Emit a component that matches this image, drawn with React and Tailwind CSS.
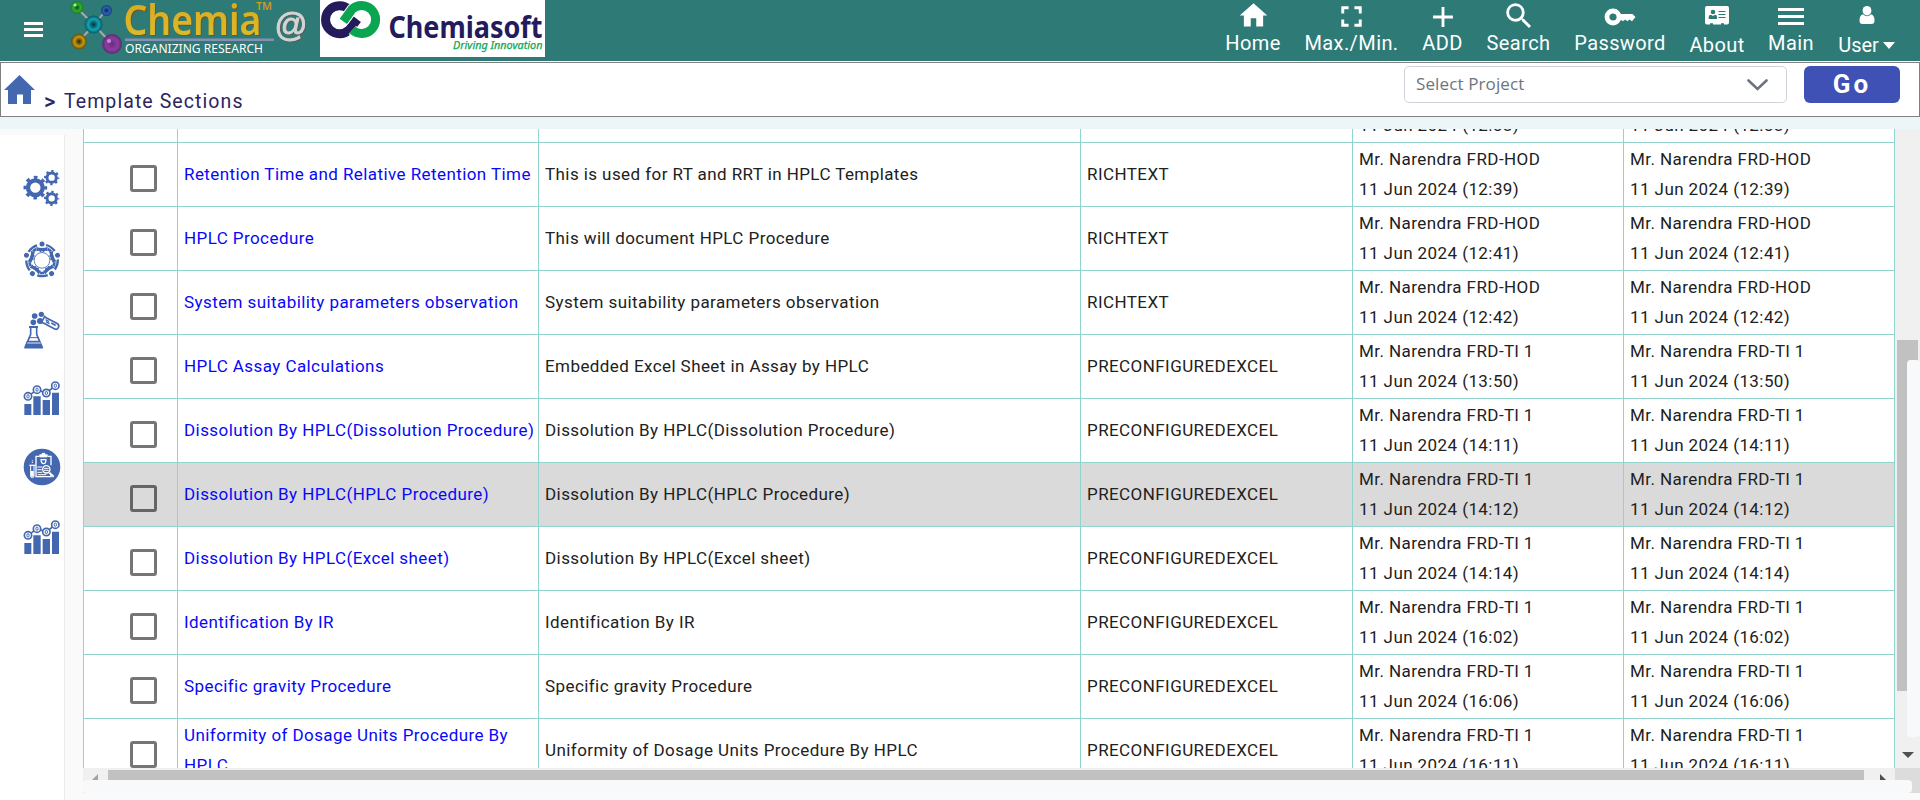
import React from "react";
import { MdHome, MdFullscreen, MdAdd, MdSearch } from "react-icons/md";

const BLUE = "#4468b0";

const HOD = "Mr. Narendra FRD-HOD";
const TL = "Mr. Narendra FRD-Tl 1";

const rows = [
  { name: "", desc: "", type: "", who: HOD, when: "11 Jun 2024 (12:38)" },
  { name: "Retention Time and Relative Retention Time", desc: "This is used for RT and RRT in HPLC Templates", type: "RICHTEXT", who: HOD, when: "11 Jun 2024 (12:39)" },
  { name: "HPLC Procedure", desc: "This will document HPLC Procedure", type: "RICHTEXT", who: HOD, when: "11 Jun 2024 (12:41)" },
  { name: "System suitability parameters observation", desc: "System suitability parameters observation", type: "RICHTEXT", who: HOD, when: "11 Jun 2024 (12:42)" },
  { name: "HPLC Assay Calculations", desc: "Embedded Excel Sheet in Assay by HPLC", type: "PRECONFIGUREDEXCEL", who: TL, when: "11 Jun 2024 (13:50)" },
  { name: "Dissolution By HPLC(Dissolution Procedure)", desc: "Dissolution By HPLC(Dissolution Procedure)", type: "PRECONFIGUREDEXCEL", who: TL, when: "11 Jun 2024 (14:11)" },
  { name: "Dissolution By HPLC(HPLC Procedure)", desc: "Dissolution By HPLC(HPLC Procedure)", type: "PRECONFIGUREDEXCEL", who: TL, when: "11 Jun 2024 (14:12)", active: true },
  { name: "Dissolution By HPLC(Excel sheet)", desc: "Dissolution By HPLC(Excel sheet)", type: "PRECONFIGUREDEXCEL", who: TL, when: "11 Jun 2024 (14:14)" },
  { name: "Identification By IR", desc: "Identification By IR", type: "PRECONFIGUREDEXCEL", who: TL, when: "11 Jun 2024 (16:02)" },
  { name: "Specific gravity Procedure", desc: "Specific gravity Procedure", type: "PRECONFIGUREDEXCEL", who: TL, when: "11 Jun 2024 (16:06)" },
  { name: "Uniformity of Dosage Units Procedure By HPLC", desc: "Uniformity of Dosage Units Procedure By HPLC", type: "PRECONFIGUREDEXCEL", who: TL, when: "11 Jun 2024 (16:11)" },
];

function ChemiaLogo() {
  return (
    <svg width="242" height="61" viewBox="68 0 242 61" className="block shrink-0">
      <defs>
        <radialGradient id="gGreen"><stop offset="0" stopColor="#0c4a10" /><stop offset=".55" stopColor="#2fae2f" /><stop offset="1" stopColor="#1c7a26" /></radialGradient>
        <radialGradient id="gBlue"><stop offset="0" stopColor="#0d2455" /><stop offset=".6" stopColor="#2a62b4" /><stop offset="1" stopColor="#153f80" /></radialGradient>
        <radialGradient id="gTeal"><stop offset="0" stopColor="#04303a" /><stop offset=".6" stopColor="#12a5b5" /><stop offset="1" stopColor="#075560" /></radialGradient>
        <radialGradient id="gGold"><stop offset="0" stopColor="#2a2000" /><stop offset=".6" stopColor="#c79a10" /><stop offset="1" stopColor="#5e4a08" /></radialGradient>
        <radialGradient id="gPurple"><stop offset="0" stopColor="#6a2c80" /><stop offset=".6" stopColor="#8a3fa0" /><stop offset="1" stopColor="#5b2a70" /></radialGradient>
        <linearGradient id="gText" x1="0" y1="0" x2="0" y2="1"><stop offset="0" stopColor="#d9a420" /><stop offset="1" stopColor="#dcc02c" /></linearGradient>
      </defs>
      <path d="M77 8 94 25 106 10M94 25 79 41M94 25 112 44" fill="none" stroke="#a9a9ad" strokeWidth="2" />
      <circle cx="77" cy="7.5" r="6.500" fill="url(#gGreen)" />
      <circle cx="106.500" cy="10.500" r="5.500" fill="url(#gBlue)" />
      <circle cx="93.500" cy="24.500" r="9" fill="url(#gTeal)" />
      <circle cx="79" cy="41.500" r="7.800" fill="url(#gGold)" />
      <circle cx="112" cy="44" r="10" fill="url(#gPurple)" />
      <circle cx="75" cy="5" r="1.600" fill="#a6f0a0" />
      <circle cx="109" cy="41" r="2" fill="#c78ad6" />
      <g fontFamily="'Noto Sans','Open Sans',sans-serif">
        <text x="123.500" y="35" fontSize="41" fontWeight="600" textLength="138" lengthAdjust="spacingAndGlyphs" fill="url(#gText)" className="drop-shadow-[1px_1px_0_#6b5a1a]">Chemia</text>
        <text x="256" y="10" fontSize="10.500" fontWeight="600" textLength="16" lengthAdjust="spacingAndGlyphs" fill="#c99c22">TM</text>
        <text x="125" y="53" fontSize="12.400" textLength="138" lengthAdjust="spacingAndGlyphs" fill="#ffffff">ORGANIZING RESEARCH</text>
      </g>
      <rect x="125" y="38.500" width="149" height="2.500" fill="#8590b4" />
      <text x="274.500" y="36" fontFamily="'Liberation Sans',sans-serif" fontSize="33.500" textLength="33" lengthAdjust="spacingAndGlyphs" fill="#d4d4d4" stroke="#d4d4d4" strokeWidth="1" className="drop-shadow-[1px_1px_0_#555f5f]">@</text>
    </svg>
  );
}

function ChemiasoftLogo() {
  return (
    <svg width="225" height="57" viewBox="320 0 225 57" className="ml-[10px] block shrink-0 bg-white">
      <g transform="translate(300 0) scale(.3333)" fill="none" strokeWidth="27">
        <path d="M147 28A42 42 0 1 0 148 89L172 58" stroke="#231b5c" />
        <path d="M157 90A42 42 0 1 0 156 28L130 64" stroke="#fff" strokeWidth="33" />
        <path d="M157 90A42 42 0 1 0 156 28L130 64" stroke="#0aa551" />
      </g>
      <g fontFamily="'Noto Sans','Open Sans',sans-serif">
        <text x="388.500" y="38.300" fontSize="31" fontWeight="700" textLength="154" lengthAdjust="spacingAndGlyphs" fill="#231b5c">Chemiasoft</text>
        <text x="453" y="49.300" fontSize="11.300" fontStyle="italic" textLength="89.500" lengthAdjust="spacingAndGlyphs" fill="#0aa551" stroke="#0aa551" strokeWidth=".25">Driving Innovation</text>
      </g>
    </svg>
  );
}

function KeyIcon() {
  return (
    <svg width="34" height="34" viewBox="0 0 34 34" className="block">
      <circle cx="10" cy="17" r="6" fill="none" stroke="#fff" strokeWidth="4.800" />
      <path d="M16 14H29.500L32.500 17 29 21.300 26.500 19.500 24.300 21.300 22.200 19.500 20 21.300 18 20H16Z" fill="#fff" />
    </svg>
  );
}

function CardIcon() {
  return (
    <svg width="24" height="19" viewBox="0 0 24 19" className="-mt-[2px] block">
      <path d="M2 0H22Q24 0 24 2V16.500Q24 18.500 22 18.500H19V17.300H16V18.500H8V17.300H5V18.500H2Q0 18.500 0 16.500V2Q0 0 2 0Z" fill="#fff" />
      <g fill="#2d7a76">
        <circle cx="8" cy="6" r="2.300" />
        <path d="M3.700 13V11Q3.700 8.800 6 8.800L8 10 10 8.800Q12 8.800 12 11V13Z" />
        <path d="M13.500 5H20.500V6H13.500ZM13.500 8H20.500V9H13.500ZM13.500 11H20.500V12H13.500Z" />
      </g>
    </svg>
  );
}

function UserIcon() {
  return (
    <svg width="16" height="19" viewBox="0 0 16 19" className="-mt-[2px] block">
      <ellipse cx="8" cy="4.700" rx="4.400" ry="4.800" fill="#fff" />
      <path d="M4 8.300Q8 12 12 8.300Q15.500 9 15.500 14.500Q15.500 18 12.500 18H3.500Q.5 18 .5 14.500Q.5 9 4 8.300Z" fill="#fff" />
    </svg>
  );
}

function Bars({ className }) {
  return (
    <span className={className}>
      <span className="h-[3px] bg-white" />
      <span className="h-[3px] bg-white" />
      <span className="h-[3px] bg-white" />
    </span>
  );
}

function NavItem({ icon, label, box, low }) {
  return (
    <div className={"flex flex-col items-center " + box}>
      <div className="flex h-[33px] items-center justify-center">{icon}</div>
      <div className={"text-[20px] leading-[20px] tracking-[0.4px] whitespace-nowrap text-white " + (low ? "pt-[2px]" : "")}>{label}</div>
    </div>
  );
}

function Gear({ cx, cy, r, w, tooth, n }) {
  const c = (2 * Math.PI * (r + w / 2)) / n;
  return (
    <g fill="none" stroke={BLUE}>
      <circle cx={cx} cy={cy} r={r} strokeWidth={w} />
      <circle cx={cx} cy={cy} r={r + w / 2} strokeWidth={tooth} strokeDasharray={c * 0.45 + " " + c * 0.55} strokeDashoffset={c * 0.225} />
    </g>
  );
}

function GearsIcon() {
  return (
    <svg width="38" height="38" viewBox="68 147 114 114" className="block">
      <Gear cx={105} cy={203} r={22} w={13} tooth={14} n={8} />
      <Gear cx={154} cy={173} r={14} w={9} tooth={9} n={8} />
      <Gear cx={154} cy={235} r={14} w={9} tooth={9} n={8} />
    </svg>
  );
}

function TeamIcon() {
  return (
    <svg width="38" height="38" viewBox="67 362 114 114" className="block">
      <g transform="translate(124 420)">
        {[0, 72, 144, 216, 288].map((a) => (
          <g key={a} transform={"rotate(" + a + ")"} fill={BLUE}>
            <circle cx="0" cy="-49" r="7.500" />
            <path d="M-17-40Q0-34 17-40L16-27Q8-31 6-24L0-27-6-24Q-8-31-16-27Z" />
            <path d="M12-46A48 48 0 0 1 38-28" fill="none" stroke={BLUE} strokeWidth="7" />
            <path d="M17-34A38 38 0 0 1 27-27" fill="none" stroke={BLUE} strokeWidth="8" />
          </g>
        ))}
        <circle r="23.500" fill="#fff" stroke={BLUE} strokeWidth="2.500" />
      </g>
    </svg>
  );
}

function FlaskIcon() {
  return (
    <svg width="38" height="38" viewBox="69 572 114 114" className="block">
      <g fill={BLUE}>
        <circle cx="104" cy="587" r="8.500" />
        <circle cx="124" cy="582" r="8" />
        <circle cx="100" cy="606" r="8.500" />
        <circle cx="120" cy="602" r="9" />
        <path d="M87 617H114V623H87Z" />
        <path d="M81 661H120L127 680H74Z" />
      </g>
      <path d="M92 622V642L75 682H127L110 642V622" fill="none" stroke={BLUE} strokeWidth="5" strokeLinejoin="round" />
      <path d="M86 652H116" stroke={BLUE} strokeWidth="3" />
      <path d="M82 668H122" stroke="#fff" strokeWidth="2.500" />
      <g transform="translate(153 610) rotate(28)">
        <path d="M-26-9H16A9 9 0 0 1 16 9H-26" fill="none" stroke={BLUE} strokeWidth="5" />
        <path d="M-27-13V13" stroke={BLUE} strokeWidth="5" />
        <path d="M-16 2H-4M0-2H15" stroke={BLUE} strokeWidth="5" />
        <path d="M-20-3H-8" stroke={BLUE} strokeWidth="4" />
      </g>
    </svg>
  );
}

function ChartIcon() {
  const nodes = [[83, 111], [110, 91], [138, 101], [165, 79]];
  return (
    <svg width="38" height="36" viewBox="68 62 114 108" className="block">
      <path d="M72 134H93V167H72ZM99 111H121V167H99ZM127 122H149V167H127ZM155 100H176V167H155Z" fill={BLUE} />
      <path d="M83 111 110 91 138 101 165 79" stroke={BLUE} strokeWidth="5" fill="none" />
      {nodes.map(([x, y]) => (
        <g key={x}>
          <circle cx={x} cy={y} r="11" fill="#fff" stroke={BLUE} strokeWidth="5" />
          <ellipse cx={x} cy={y} rx="3.500" ry="5" fill="#fff" stroke={BLUE} strokeWidth="3" />
        </g>
      ))}
    </svg>
  );
}

function ReportIcon() {
  return (
    <svg width="38" height="38" viewBox="68 266 114 114" className="block">
      <circle cx="125" cy="323" r="55" fill={BLUE} />
      <g fill="none" stroke="#fff" strokeWidth="4">
        <path d="M117 291H107V352H152V346M152 318V291H143" />
        <path d="M118 286H141V293H118ZM125 286V282H134V286" fill="#fff" strokeWidth="2" />
        <path d="M122 300Q122 313 130 313Q137 313 137 300M122 301H137" />
        <path d="M111 323H126M111 331H124M111 339H126M112 346H138" strokeWidth="3" />
        <circle cx="138" cy="330" r="11" fill={BLUE} />
        <path d="M131 327H145M131 333H145" strokeWidth="3" />
        <path d="M147 340 160 352" strokeWidth="6" />
        <path d="M87 318H105" />
        <path d="M91 320V350Q91 355 96 355Q101 355 101 350V320" strokeWidth="3" />
        <path d="M96 335V352" strokeWidth="8" />
        <path d="M96 303V312" strokeWidth="3" strokeDasharray="3 2" />
      </g>
    </svg>
  );
}

function Row({ row }) {
  const cell = "flex items-center border-l border-[#93d3cd] pb-[2px] pl-[6px]";
  return (
    <div className={"grid h-16 grid-cols-[94px_361px_542px_272px_271px_271px] border-t border-r border-[#93d3cd] " + (row.active ? "bg-[#dadada]" : "bg-white")}>
      <div className="flex items-start border-l border-[#93d3cd] pt-[22px] pl-[46px]">
        <span className={"size-[27px] rounded-[3px] border-[3px] " + (row.active ? "border-[#656565]" : "border-[#757575]")} />
      </div>
      <div className={cell + " text-[#0808f8]"}>{row.name}</div>
      <div className={cell}>{row.desc}</div>
      <div className={cell}>{row.type}</div>
      <div className={cell}><div>{row.who}<br />{row.when}</div></div>
      <div className={cell}><div>{row.who}<br />{row.when}</div></div>
    </div>
  );
}

export default function App() {
  return (
    <div className="flex h-[800px] w-[1920px] flex-col overflow-hidden bg-white font-['Roboto',sans-serif]">
      <header className="flex h-[61px] shrink-0 items-start bg-[#2d7a76]">
        <Bars className="mt-[22px] ml-6 flex h-[15px] w-[19px] flex-col justify-between" />
        <div className="ml-[25px] flex">
          <ChemiaLogo />
          <ChemiasoftLogo />
        </div>
        <nav className="ml-auto flex gap-[25px] pr-[25px]">
          <NavItem box="w-[54px]" label="Home" icon={<MdHome className="-mt-[2px] size-[33px] text-white" />} />
          <NavItem box="w-[93px]" label="Max./Min." icon={<MdFullscreen className="size-[35px] text-white" />} />
          <NavItem box="w-[39px]" label="ADD" icon={<MdAdd className="size-[34px] text-white" />} />
          <NavItem box="w-[63px]" label="Search" icon={<MdSearch className="-mt-[2px] size-[34px] text-white" />} />
          <NavItem box="w-[90px]" label="Password" icon={<KeyIcon />} />
          <NavItem box="w-[54px]" label="About" low icon={<CardIcon />} />
          <NavItem box="w-[44px]" label="Main" icon={<Bars className="flex h-[17px] w-[26px] flex-col justify-between" />} />
          <NavItem
            box="w-[57px]"
            low
            icon={<UserIcon />}
            label={
              <span className="flex items-center gap-[4px] tracking-[-0.1px]">
                User
                <svg width="12" height="7" viewBox="0 0 12 7"><path d="M0 0H12L6 7Z" fill="#fff" /></svg>
              </span>
            }
          />
        </nav>
      </header>

      <div className="mt-px flex h-[55px] shrink-0 items-start border border-[#808080] bg-white">
        <svg width="31" height="29" viewBox="0 0 31 29" className="mt-3 ml-[3px] block">
          <path d="M15.500 0 31 15H27V29H19V19.500H13V29H4V15H0Z" fill={BLUE} />
        </svg>
        <div className="mt-[27px] ml-[9px] flex text-[19.500px] leading-[24px] text-[#2b2562]">
          <span className="w-[20px] text-[22px] font-medium">&gt;</span>
          <span className="tracking-[1.080px]">Template Sections</span>
        </div>
        <div className="mt-[3px] ml-auto flex h-[37px] w-[383px] items-center justify-between rounded-[5px] border border-[#ced4da] pr-[18px] pl-[11px] font-['Open_Sans',sans-serif] text-[17px] text-[#6c757d]">
          <span className="-mt-[2px] tracking-[0.120px]">Select Project</span>
          <svg width="21" height="12" viewBox="0 0 21 12"><path d="M1.500 1.500 10.500 10 19.500 1.500" fill="none" stroke="#6c757d" strokeWidth="2.600" strokeLinecap="round" /></svg>
        </div>
        <button className="mt-[3px] mr-[19px] ml-[17px] h-[37px] w-24 rounded-[6px] bg-[#3f51b5] text-[26px] leading-[37px] font-bold tracking-[3px] text-white">Go</button>
      </div>

      <div className="h-3 shrink-0 bg-[#ecf5f8]" />

      <div className="flex min-h-0 flex-1 bg-[#fafafa]">
        <aside className="mt-[6px] flex w-[65px] shrink-0 flex-col border-r border-[#ebebeb] bg-white pt-[34px] pl-[23px]">
          <GearsIcon />
          <div className="mt-[34px]"><TeamIcon /></div>
          <div className="mt-[32px]"><FlaskIcon /></div>
          <div className="mt-[31px]"><ChartIcon /></div>
          <div className="mt-[32px]"><ReportIcon /></div>
          <div className="mt-[33px]"><ChartIcon /></div>
        </aside>

        <div className="ml-[18px] flex flex-1 flex-col">
          <div className="flex h-[639px] shrink-0">
            <div className="w-[1812px] shrink-0 overflow-hidden text-[17px] leading-[30px] tracking-[0.420px] text-[#212121]">
              <div className="-mt-[51px]">
                {rows.map((row) => <Row key={row.when} row={row} />)}
              </div>
            </div>
            <div className="relative flex-1 bg-[#f0f0f0]">
              <div className="absolute top-[211px] left-[2px] h-[351px] w-[21px] bg-[#c1c1c1]" />
              <div className="absolute top-[231px] right-0 left-[12px] h-[377px] rounded-[4px] bg-[#f8f9fb]" />
              <svg width="12" height="6" viewBox="0 0 12 6" className="absolute top-[623px] left-[7px]"><path d="M0 0H12L6 6Z" fill="#505050" /></svg>
            </div>
          </div>
          <div className="relative h-[25px] shrink-0 bg-[#dcdcdc]">
            <div className="h-full w-[1812px] bg-[#f0f0f0]" />
            <div className="absolute top-[2px] left-[25px] h-[10px] w-[1756px] bg-[#c1c1c1]" />
            <svg width="6" height="6" viewBox="0 0 6 6" className="absolute top-[6px] left-[9px]"><path d="M6 0V6H0Z" fill="#a3a3a3" /></svg>
            <svg width="6" height="6" viewBox="0 0 6 6" className="absolute top-[6px] left-[1797px]"><path d="M0 0V6H6Z" fill="#505050" /></svg>
            <div className="absolute top-[12px] left-0 h-[13px] w-[1829px] rounded-[4px] bg-[#f8f9fb]" />
          </div>
        </div>
      </div>
    </div>
  );
}
